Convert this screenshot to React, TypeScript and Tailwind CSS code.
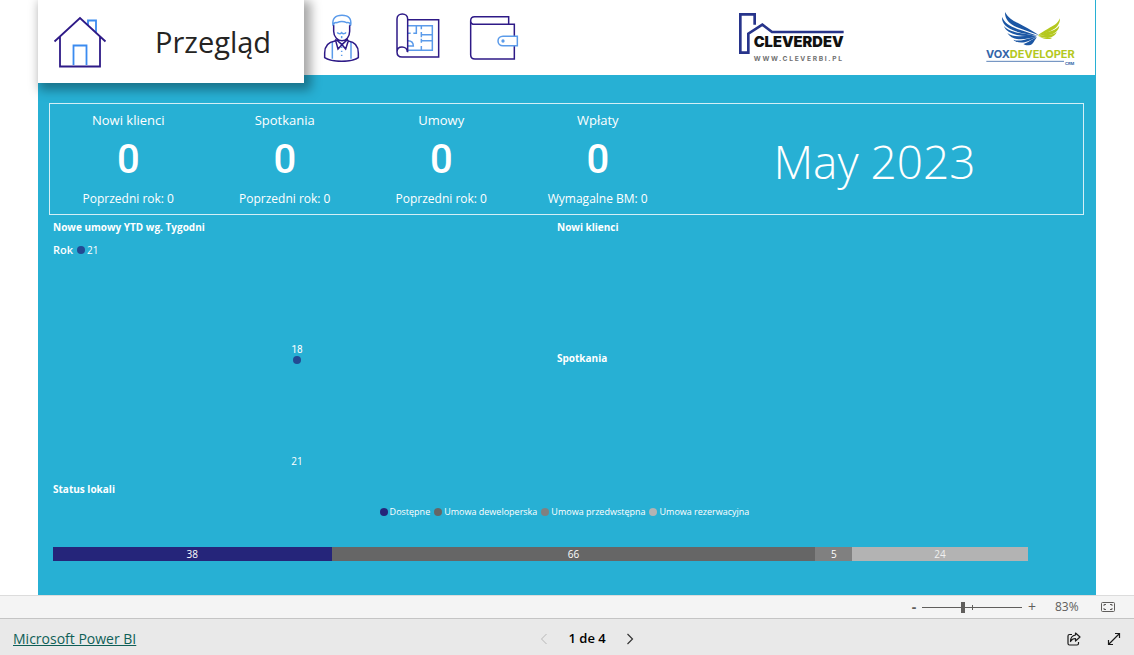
import type { ReactNode } from 'react';

type KpiProps = {
  title: string;
  value: number;
  note: string;
};

const kpis: KpiProps[] = [
  { title: 'Nowi klienci', value: 0, note: 'Poprzedni rok: 0' },
  { title: 'Spotkania', value: 0, note: 'Poprzedni rok: 0' },
  { title: 'Umowy', value: 0, note: 'Poprzedni rok: 0' },
  { title: 'Wpłaty', value: 0, note: 'Wymagalne BM: 0' },
];

const statuses = [
  { label: 'Dostępne', value: 38, bg: 'bg-[#25257a]', text: 'text-white' },
  { label: 'Umowa deweloperska', value: 66, bg: 'bg-[#666666]', text: 'text-white' },
  { label: 'Umowa przedwstępna', value: 5, bg: 'bg-[#808080]', text: 'text-white' },
  { label: 'Umowa rezerwacyjna', value: 24, bg: 'bg-[#b3b3b3]', text: 'text-[#f0f0f0]' },
];

const NAVY = '#2e1a87';
const SKY = '#5b9bea';

function HouseIcon() {
  return (
    <svg width="54" height="54" viewBox="0 0 54 54" fill="none" strokeWidth="1.8">
      <path d="M35 10V5.500h8V17.500M20.500 50V30.500h13V50" stroke="#3b8bf0" />
      <path d="M1.500 26.500 27 3 52.500 26.500M7 22V51.500h40V22" stroke={NAVY} />
    </svg>
  );
}

function PersonIcon() {
  return (
    <svg width="50" height="50" viewBox="21 36 150 150" fill="none" strokeWidth="4.500">
      <path
        d="M69 76C66 56 76 46 96 46s29 10 26 30M70 78c0-8 4-12 11-10 8-4 21-4 29 0 8-2 11 2 11 10M82 97c3 5 9 5 13 1 4 4 10 4 13-1M95 108v7M67 126v50M123 126v50"
        stroke={SKY}
      />
      <path d="M95 140v34" stroke={SKY} strokeDasharray="4 8" />
      <path
        d="M71 76v18c0 18 13 28 25 28s23-10 23-28V76M78 118l-3 5c-20 3-31 15-31 36v14c14 9 32 11 51 11s37-2 50-11v-14c0-21-11-33-30-36l-4-5M77 122l7 25 12-13 11 13 8-25M79 119l17 15 16-15"
        stroke={NAVY}
      />
    </svg>
  );
}

function PlanIcon() {
  return (
    <svg width="50" height="50" viewBox="249 36 150 150" fill="none" strokeWidth="4.500">
      <path
        d="M294 77h73v74h-73M294 100h8M310 100h9V78M334 77v11M334 104h33M334 96v16M334 122h33M334 116v12M334 138v13M294 122c10 0 16 6 16 16h-16"
        stroke={SKY}
      />
      <path
        d="M261 157V57c0-9 7-15 16-15s16 6 16 15v100M293 59h93v112H276M276 171c-9 0-15-6-15-15s6-15 15-15 16 6 16 15"
        stroke={NAVY}
      />
    </svg>
  );
}

function WalletIcon() {
  return (
    <svg width="50" height="50" viewBox="477 36 150 150" fill="none" strokeWidth="4.500">
      <path d="M596 72V50H494c-8 0-12 5-12 12s5 11 12 11h119v35M482 62v102c0 9 5 13 13 13h118v-39" stroke={NAVY} />
      <path d="M622 109h-43c-9 0-15 6-15 14s6 14 15 14h43z" stroke={SKY} />
      <circle cx="579" cy="123" r="5" fill={SKY} />
    </svg>
  );
}

function CleverdevLogo() {
  return (
    <svg width="110" height="54" viewBox="54 33 330 162" role="img" aria-label="CLEVERDEV">
      <path d="M104 74V43H61v115h24v-57l42-27 29 22h215" fill="none" stroke="#27348b" strokeWidth="8" />
      <text x="101" y="142" fontSize="44" fontWeight="900" fontFamily="Inter, sans-serif" fill="#111111">
        CLEVERDEV
      </text>
      <text x="101" y="184" fontSize="20" fontWeight="700" letterSpacing="5" fontFamily="Inter, sans-serif" fill="#707070">
        WWW.CLEVERBI.PL
      </text>
    </svg>
  );
}

function VoxLogo() {
  return (
    <svg width="92" height="56" viewBox="45 30 276 168" role="img" aria-label="VOXDEVELOPER CRM">
      <g fill="#1b56a4">
        <path d="M105 36c10 20 30 29 54 41 20 10 35 20 48 29-22-9-45-15-66-24-24-11-37-25-36-46z" />
        <path d="M96 51c8 18 23 27 46 36 23 8 42 13 62 21-24-5-45-7-67-14-26-9-42-22-41-43z" />
        <path d="M102 78c10 12 23 16 41 20 20 4 40 5 58 11-20-1-40 0-60-4-20-5-36-14-39-27z" />
        <path d="M112 99c11 8 24 10 39 10 17 0 33-2 49 1-16 2-31 7-48 8-18 0-33-7-40-19z" />
        <path d="M130 119c10 4 20 3 31 1 14-3 25-9 39-9-12 5-22 13-36 16-14 2-27 0-34-8z" />
        <path d="M160 132c13-2 25-15 41-20-8 8-10 20-20 23-8 2-16 1-21-3z" />
      </g>
      <g fill="#b4c81e">
        <path d="M270 55c-7 16-20 23-36 31-13 7-23 13-31 21 13-5 27-8 39-14 17-8 28-19 28-38z" />
        <path d="M268 77c-8 11-20 15-34 18-11 3-21 7-30 13 13-2 25-1 37-4 15-4 25-13 27-27z" />
        <path d="M260 96c-9 7-18 8-29 9-9 0-17 2-26 4 9 1 18 5 28 5 13-1 24-8 27-18z" />
        <path d="M247 113c-10 3-24 0-38-3 6 3 12 7 21 7 7 0 13 0 17-4z" />
      </g>
      <text x="48" y="173" fontSize="33" fontWeight="700" fontFamily="Inter, sans-serif" fill="#3465a8">
        VOX
        <tspan fill="#b4c81e">DEVELOPER</tspan>
      </text>
      <path d="M49 184h233" stroke="#5c83b8" strokeWidth="3" />
      <text x="285" y="196" fontSize="12" fontWeight="700" fontFamily="Inter, sans-serif" fill="#3465a8">
        CRM
      </text>
    </svg>
  );
}

function Kpi({ title, value, note }: KpiProps) {
  return (
    <div className="pt-1.5 pb-[5px] text-center">
      <h2 className="text-[13px] leading-5">{title}</h2>
      <p className="mt-2.5 mb-[9px] font-[Roboto,sans-serif] text-[40px] leading-10 font-medium">{value}</p>
      <p className="text-xs leading-5">{note}</p>
    </div>
  );
}

function ChartTitle({ children }: { children: ReactNode }) {
  return <h3 className="text-[10px] leading-4 font-bold">{children}</h3>;
}

function Header() {
  return (
    <header className="flex h-[75px] items-start border-r border-[#27b0d4] bg-white">
      <div className="relative z-10 flex h-[83px] w-[266px] items-center bg-white pl-[15px] shadow-[4px_4px_10px_3px_rgba(0,0,0,0.35)]">
        <HouseIcon />
        <h1 className="ml-12 text-[29px] text-[#252423]">Przegląd</h1>
      </div>
      <nav className="ml-[13px] flex h-full items-center gap-[26px] pb-0.5">
        <button type="button" aria-label="Klienci">
          <PersonIcon />
        </button>
        <button type="button" aria-label="Lokale">
          <PlanIcon />
        </button>
        <button type="button" aria-label="Płatności">
          <WalletIcon />
        </button>
      </nav>
      <div className="mr-[18px] ml-auto flex h-full items-center gap-[137px]">
        <CleverdevLogo />
        <VoxLogo />
      </div>
    </header>
  );
}

function Report() {
  return (
    <main className="mx-[38px] flex-1 bg-[#27b0d4] text-white">
      <Header />

      <section className="mt-7 mr-3 ml-[11px] grid grid-cols-[313fr_313fr_313fr_313fr_814fr] border border-white/80">
        {kpis.map((kpi) => (
          <Kpi key={kpi.title} {...kpi} />
        ))}
        <p className="self-center pt-1 pr-2.5 text-center text-[46px] leading-none font-light">May 2023</p>
      </section>

      <div className="grid grid-cols-2 pt-1 pr-[35px] pl-[15px]">
        <section>
          <ChartTitle>Nowe umowy YTD wg. Tygodni</ChartTitle>
          <p className="mt-[7px] flex items-center text-[10px] leading-4">
            <span className="text-[11px] font-semibold">Rok</span>
            <span className="mr-0.5 ml-1 size-2 rounded-full bg-[#234a93]" />
            21
          </p>
          <div className="mt-[86px] flex flex-col items-center pr-4 text-[10px] leading-3">
            <span className="font-[Roboto,sans-serif]">18</span>
            <span className="size-2 rounded-full bg-[#234a93]" />
            <span className="mt-[91px]">21</span>
          </div>
        </section>
        <div>
          <ChartTitle>Nowi klienci</ChartTitle>
          <div className="mt-[115px]">
            <ChartTitle>Spotkania</ChartTitle>
          </div>
        </div>
      </div>

      <section className="mt-3.5 mr-5 mb-8 ml-[15px]">
        <ChartTitle>Status lokali</ChartTitle>
        <ul className="mt-[7px] flex justify-center gap-1 text-[9px] leading-4">
          {statuses.map((status) => (
            <li key={status.label} className="flex items-center gap-0.5">
              <span className={`size-2 rounded-full ${status.bg}`} />
              {status.label}
            </li>
          ))}
        </ul>
        <div className="mt-[27px] mr-12 flex text-center text-[10px] leading-[14px]">
          {statuses.map((status) => (
            <div key={status.label} className={`${status.bg} ${status.text}`} style={{ flex: `${status.value} 0 0` }}>
              {status.value}
            </div>
          ))}
        </div>
      </section>
    </main>
  );
}

function ZoomBar() {
  return (
    <div className="flex h-6 items-center justify-end border-t border-b border-t-[#dcdcdc] border-b-[#c4c4c4] bg-[#f4f4f4] pr-[19px] text-xs text-[#605e5c]">
      <button type="button" aria-label="Zoom out" className="w-3 text-sm leading-4 font-bold">
        -
      </button>
      <div className="relative mx-0.5 flex h-4 w-[100px] items-center">
        <span className="absolute left-1/2 h-[5px] w-px bg-[#605e5c]" />
        <input
          type="range"
          aria-label="Zoom"
          min={10}
          max={190}
          defaultValue={83}
          className="h-px w-full appearance-none bg-[#605e5c] [&::-webkit-slider-thumb]:h-[11px] [&::-webkit-slider-thumb]:w-1 [&::-webkit-slider-thumb]:appearance-none [&::-webkit-slider-thumb]:bg-[#605e5c]"
        />
      </div>
      <button type="button" aria-label="Zoom in" className="w-4 text-sm leading-4">
        +
      </button>
      <span className="ml-[15px] w-[46px]">83%</span>
      <button type="button" aria-label="Fit to page">
        <svg width="14" height="10" viewBox="0 0 14 10" fill="none" stroke="#605e5c">
          <rect x="0.500" y="0.500" width="13" height="9" rx="1" />
          <path d="M3 4V2.500h2M9 2.500h2V4M11 6v1.500H9M5 7.500H3V6" />
        </svg>
      </button>
    </div>
  );
}

function Footer() {
  return (
    <footer className="flex h-9 items-center justify-between bg-[#e9e9e9] pt-1 pl-[13px] text-[13px] text-black">
      <a href="#" className="text-sm text-[#0f5f57] underline">
        Microsoft Power BI
      </a>
      <div className="flex items-center">
        <button type="button" aria-label="Previous page" disabled>
          <svg width="8" height="12" viewBox="0 0 8 12" fill="none" stroke="#b8b8b8">
            <path d="M6.500 1 1.500 6l5 5" />
          </svg>
        </button>
        <span className="w-[78px] text-center font-semibold">1 de 4</span>
        <button type="button" aria-label="Next page">
          <svg width="8" height="12" viewBox="0 0 8 12" fill="none" stroke="#333333" strokeWidth="1.200">
            <path d="M1.500 1l5 5-5 5" />
          </svg>
        </button>
      </div>
      <div className="flex pl-4">
        <button type="button" aria-label="Share" className="flex h-8 w-10 items-center justify-center">
          <svg width="14" height="14" viewBox="0 0 14 14" fill="none" stroke="#1a1a1a" strokeWidth="1.200">
            <path d="M5 2.500H2.500a1.500 1.500 0 0 0-1.500 1.500v7.500A1.500 1.500 0 0 0 2.500 13h7.500a1.500 1.500 0 0 0 1.500-1.500V10" />
            <path d="M8.500 1l4.500 4-4.500 4V6.500C6 6.500 4.500 7.500 3.500 9.500c0-4 2-6 5-6.500z" strokeLinejoin="round" />
          </svg>
        </button>
        <button type="button" aria-label="Full screen" className="flex h-8 w-10 items-center justify-center">
          <svg width="14" height="14" viewBox="0 0 14 14" fill="none" stroke="#1a1a1a" strokeWidth="1.200">
            <path d="M1.500 12.500l11-11M8 1.500h4.500V6M1.500 8v4.500H6" />
          </svg>
        </button>
      </div>
    </footer>
  );
}

export default function App() {
  return (
    <div className="flex min-h-screen flex-col bg-white font-['Open_Sans',sans-serif]">
      <Report />
      <ZoomBar />
      <Footer />
    </div>
  );
}
